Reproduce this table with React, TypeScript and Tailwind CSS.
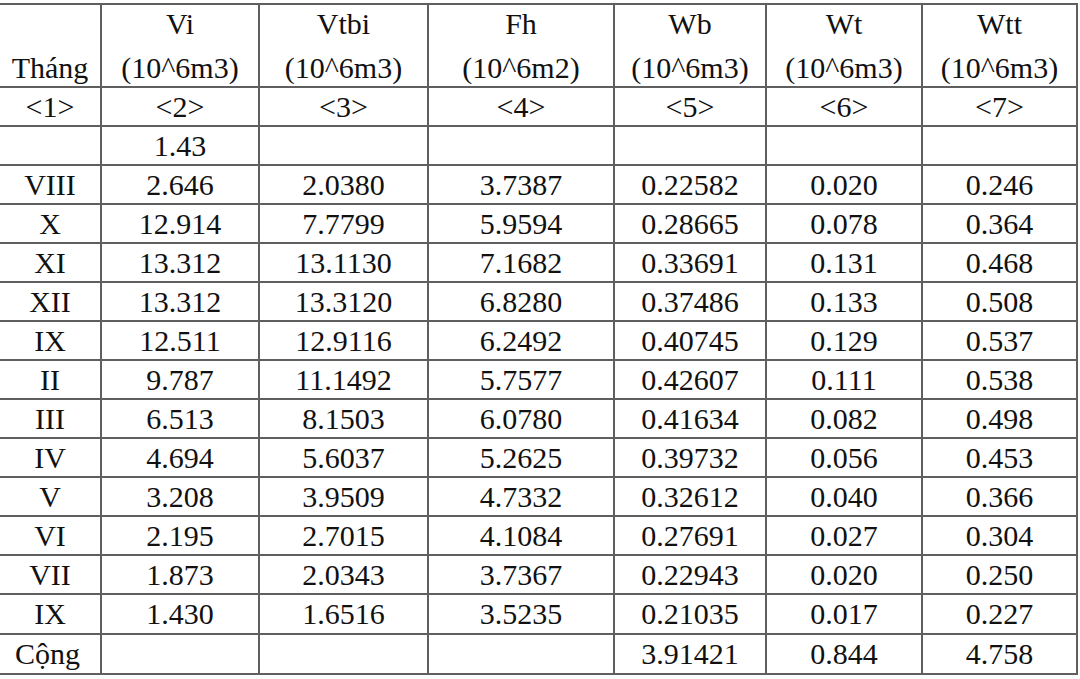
import React from "react";

const headers: [string, string][] = [
  ["", "Tháng"],
  ["Vi", "(10^6m3)"],
  ["Vtbi", "(10^6m3)"],
  ["Fh", "(10^6m2)"],
  ["Wb", "(10^6m3)"],
  ["Wt", "(10^6m3)"],
  ["Wtt", "(10^6m3)"],
];

const rows: string[][] = [
  ["<1>", "<2>", "<3>", "<4>", "<5>", "<6>", "<7>"],
  ["", "1.43", "", "", "", "", ""],
  ["VIII", "2.646", "2.0380", "3.7387", "0.22582", "0.020", "0.246"],
  ["X", "12.914", "7.7799", "5.9594", "0.28665", "0.078", "0.364"],
  ["XI", "13.312", "13.1130", "7.1682", "0.33691", "0.131", "0.468"],
  ["XII", "13.312", "13.3120", "6.8280", "0.37486", "0.133", "0.508"],
  ["IX", "12.511", "12.9116", "6.2492", "0.40745", "0.129", "0.537"],
  ["II", "9.787", "11.1492", "5.7577", "0.42607", "0.111", "0.538"],
  ["III", "6.513", "8.1503", "6.0780", "0.41634", "0.082", "0.498"],
  ["IV", "4.694", "5.6037", "5.2625", "0.39732", "0.056", "0.453"],
  ["V", "3.208", "3.9509", "4.7332", "0.32612", "0.040", "0.366"],
  ["VI", "2.195", "2.7015", "4.1084", "0.27691", "0.027", "0.304"],
  ["VII", "1.873", "2.0343", "3.7367", "0.22943", "0.020", "0.250"],
  ["IX", "1.430", "1.6516", "3.5235", "0.21035", "0.017", "0.227"],
  ["Cộng", "", "", "", "3.91421", "0.844", "4.758"],
];

export default function App() {
  return (
    <div
      className="w-[1080px] h-[679px] bg-white text-[#111] overflow-hidden"
      style={{ fontFamily: '"Liberation Serif", "Times New Roman", serif' }}
    >
      <div className="mt-[3px] w-[1078px] border-t-2 border-[#5f5f5f] grid grid-cols-[102px_158px_169px_186px_152px_156px_155px] text-[30px]">
        {headers.map(([a, b], i) => (
          <div
            key={"h" + i}
            className="h-[83px] border-r-2 border-b-2 border-[#5f5f5f] flex flex-col items-center"
          >
            <div className="leading-[30px] h-[30px] mt-[4px]">{a}</div>
            <div className="leading-[30px] h-[30px] mt-[14px]">{b}</div>
          </div>
        ))}
        {rows.map((r, ri) =>
          r.map((c, ci) => (
            <div
              key={ri + "-" + ci}
              className={
                (ri >= 13 ? "h-[40px] " : "h-[39px] ") +
                "border-r-2 border-b-2 border-[#5f5f5f] flex items-center leading-[30px] " +
                (ri === rows.length - 1 && ci === 0 ? "justify-start pl-[15px]" : "justify-center")
              }
            >
              {c}
            </div>
          ))
        )}
      </div>
    </div>
  );
}
